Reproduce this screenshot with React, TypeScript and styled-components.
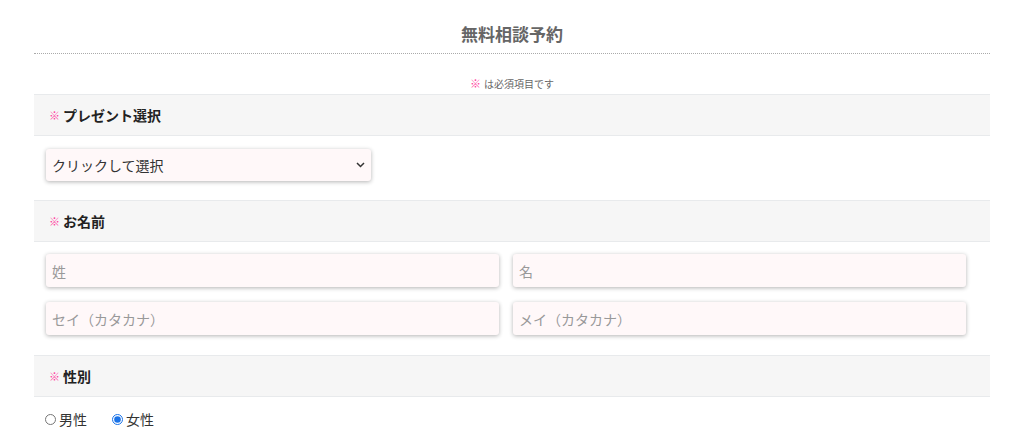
import React from "react";
import styled, { createGlobalStyle } from "styled-components";

const GlobalStyle = createGlobalStyle`
  body {
    margin: 0;
    background: #fff;
    font-family: "Noto Sans CJK JP", "Noto Sans", sans-serif;
    color: #333;
  }
`;

const Container = styled.div`
  width: 956px;
  margin: 0 auto;
  padding-top: 22px;
`;

const Title = styled.h2`
  margin: 0;
  padding-bottom: 7px;
  text-align: center;
  font-size: 17px;
  line-height: 24px;
  font-weight: 700;
  color: #666;
  border-bottom: 1px dotted #aaa;
`;

const RequiredNote = styled.p`
  margin: 22px 0 3px;
  text-align: center;
  font-size: 10px;
  line-height: 14px;
  color: #666;
`;

const Mark = styled.span`
  color: #ff3fa0;
  font-size: 11px;
  margin-right: 3px;
`;

const SectionHeader = styled.div`
  background: #f6f6f6;
  border-top: 1px solid #e8eaec;
  border-bottom: 1px solid #e8eaec;
  height: 40px;
  display: flex;
  align-items: center;
  padding-left: 15px;
  font-size: 14px;
  font-weight: 700;
  color: #222;
`;

const SectionBody = styled.div<{ $top: number; $bottom: number }>`
  padding: ${(p) => p.$top}px 24px ${(p) => p.$bottom}px 12px;
`;

const SelectBox = styled.div`
  width: 325px;
  height: 32px;
  box-sizing: border-box;
  display: flex;
  align-items: center;
  justify-content: space-between;
  padding: 0 6px 0 6px;
  background: #fff8f9;
  border-radius: 3px;
  box-shadow: 0 1px 4px rgba(0, 0, 0, 0.3);
  font-size: 14px;
  color: #333;
`;

const FieldGrid = styled.div`
  display: grid;
  grid-template-columns: 453px 453px;
  column-gap: 14px;
  row-gap: 15px;
`;

const TextInput = styled.input`
  height: 33px;
  box-sizing: border-box;
  border: none;
  border-radius: 3px;
  background: #fff8f9;
  box-shadow: 0 1px 4px rgba(0, 0, 0, 0.3);
  padding: 0 6px;
  font-family: inherit;
  font-size: 14px;
  color: #333;
  outline: none;

  &::placeholder {
    color: #999;
  }
`;

const RadioRow = styled.div`
  display: flex;
  gap: 26px;
  font-size: 14px;
  color: #333;
`;

const RadioLabel = styled.label`
  display: flex;
  align-items: center;
`;

const Radio = styled.input`
  width: 11px;
  height: 11px;
  margin: 0 3px 0 -1px;
  accent-color: #1a73e8;
`;

const App = () => (
  <>
    <GlobalStyle />
    <Container>
      <Title>無料相談予約</Title>
      <RequiredNote>
        <Mark>※</Mark>は必須項目です
      </RequiredNote>

      <SectionHeader>
        <Mark>※</Mark>プレゼント選択
      </SectionHeader>
      <SectionBody $top={13} $bottom={19}>
        <SelectBox>
          <span>クリックして選択</span>
          <svg width="9" height="6" viewBox="0 0 9 6">
            <path d="M1 1l3.5 3.5L8 1" fill="none" stroke="#333" strokeWidth="1.5" />
          </svg>
        </SelectBox>
      </SectionBody>

      <SectionHeader>
        <Mark>※</Mark>お名前
      </SectionHeader>
      <SectionBody $top={12} $bottom={20}>
        <FieldGrid>
          <TextInput placeholder="姓" />
          <TextInput placeholder="名" />
          <TextInput placeholder="セイ（カタカナ）" />
          <TextInput placeholder="メイ（カタカナ）" />
        </FieldGrid>
      </SectionBody>

      <SectionHeader>
        <Mark>※</Mark>性別
      </SectionHeader>
      <SectionBody $top={12} $bottom={12}>
        <RadioRow>
          <RadioLabel>
            <Radio type="radio" name="gender" />
            男性
          </RadioLabel>
          <RadioLabel>
            <Radio type="radio" name="gender" defaultChecked />
            女性
          </RadioLabel>
        </RadioRow>
      </SectionBody>
    </Container>
  </>
);

export default App;
